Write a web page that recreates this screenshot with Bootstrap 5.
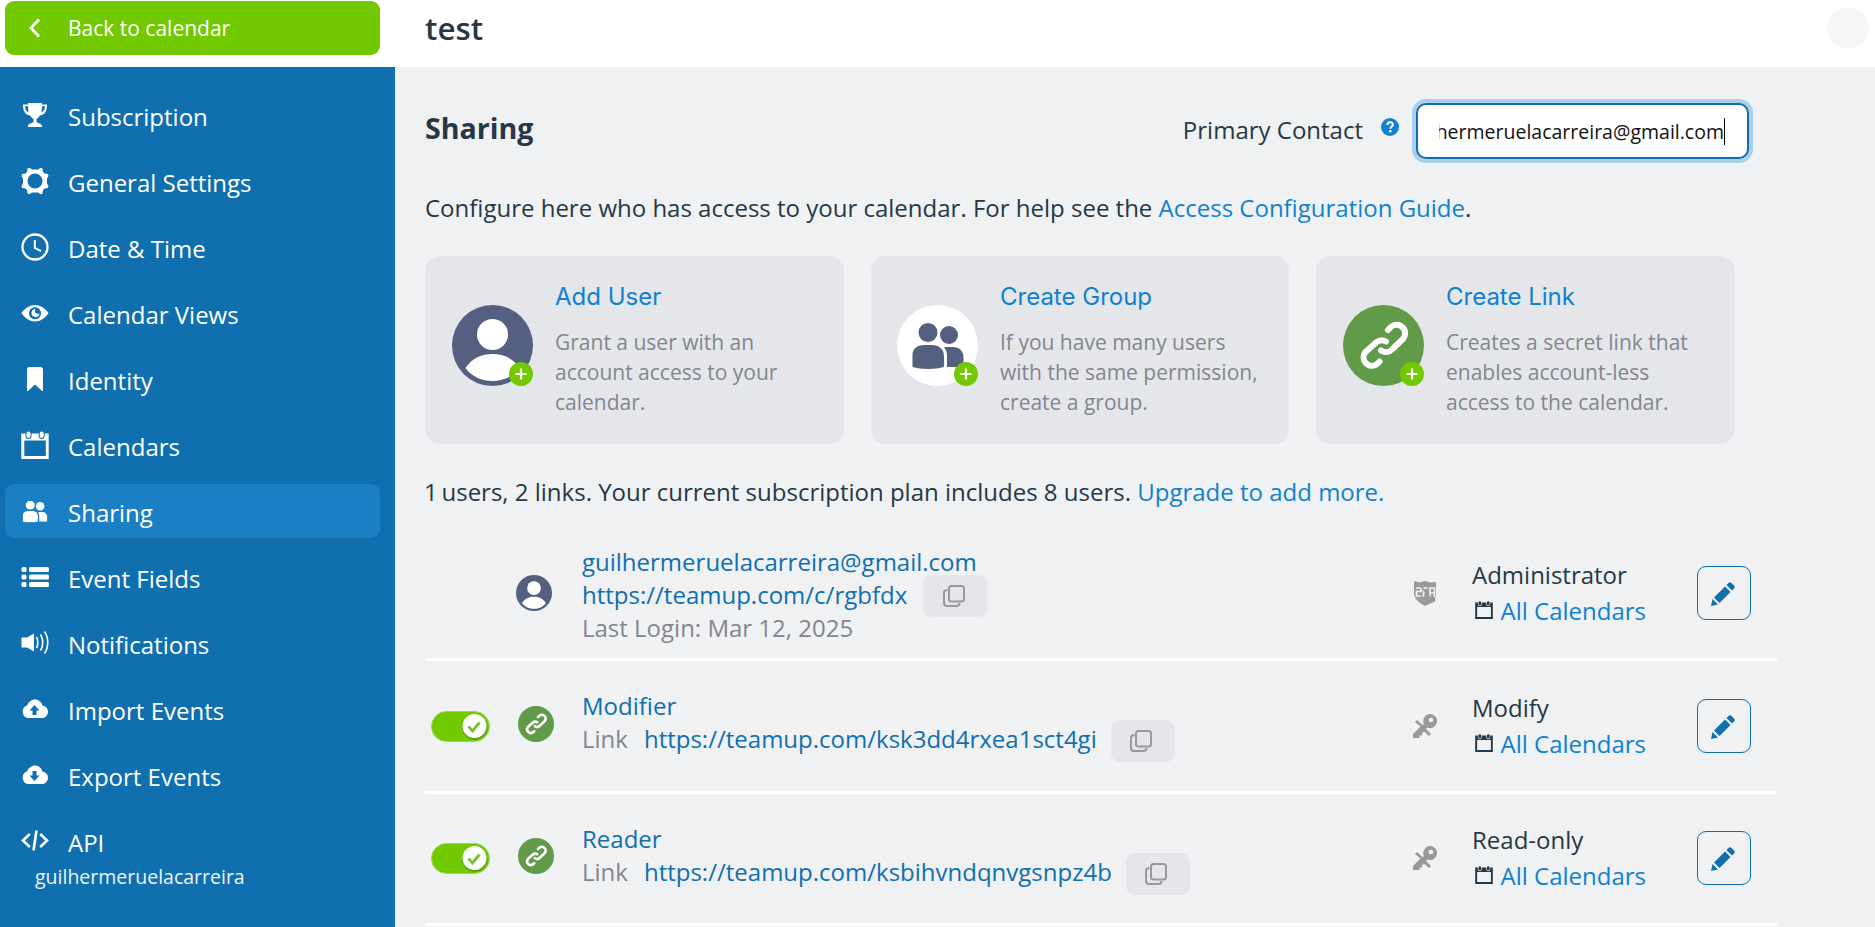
<!DOCTYPE html>
<html lang="en">
<head>
<meta charset="utf-8">
<title>test - Sharing</title>
<link href="https://cdn.jsdelivr.net/npm/bootstrap@5.3.0/dist/css/bootstrap.min.css" rel="stylesheet">
<style>
  html, body { height: 100%; }
  body { font-family: "Open Sans", sans-serif; font-size: 24px; line-height: 33px; color: #263845; background: #eff1f3; overflow: hidden; }
  a { text-decoration: none; color: #1081d0; }
  svg { display: block; }
  .page { height: 927px; }
  .topbar { height: 67px; background: #fff; }
  .topbar-left { width: 395px; padding: 1px 15px 0 5px; }
  .btn-back { width: 375px; height: 54px; background: #72c900; border-radius: 9px; color: #fff; font-size: 21px; }
  .btn-back svg { margin: 0 27px 0 24px; }
  .cal-title { font-size: 31.3px; font-weight: 600; line-height: 40px; margin: 8px 0 0 30px; }
  .avatar-spot { width: 42px; height: 42px; background: #f7f7f7; margin: 7px 6px 0 0; }
  .sidebar { width: 395px; background: #106fae; padding: 21px 15px 0 5px; }
  .side-item { height: 54px; margin-bottom: 12px; border-radius: 9px; color: #fff; }
  .side-item.current { background: #1b80c3; }
  .side-item svg { width: 28px; height: 28px; margin: 13px 0 0 16px; flex: none; fill: #fff; }
  .side-item span { margin: 12px 0 0 19px; }
  .side-user { color: #eaf4fb; font-size: 19.5px; line-height: 28px; margin: -17px 0 0 30px; font-weight: 500; }
  .content-area { padding: 33px 0 0 30px; width: 1382px; }
  .h-sharing { font-size: 28.6px; font-weight: 700; line-height: 40px; margin: 8px 0 0; }
  .contact-label { margin-top: 13px; }
  .help-dot { margin: 18px 17px 0 18px; }
  .contact-box { width: 333px; height: 56px; margin: 3px 28px 0 0; padding-left: 21px; border: 2px solid #106fae; border-radius: 10px; background: #fff; box-shadow: 0 0 0 4px #a9cfe9; color: #111; font-size: 19.5px; }
  .contact-clip { width: 286px; overflow: hidden; display: flex; justify-content: flex-end; white-space: nowrap; border-right: 1px solid #000; line-height: 27px; }
  .intro { margin: 32px 0; }
  .plan-line { margin: 31px 0 20px; }
  .plan-line span { margin: 0 -2.5px 0 -1px; }
  .share-list { gap: 27px; }
  .share-card { width: 419px; height: 188px; background: #e4e6ea; border-radius: 15px; padding: 22px 0 0 27px; }
  .share-card h3 { font: 400 24px/34px Inter, sans-serif; color: #1081d0; margin: 2px 0 13px; }
  .share-card p { font-size: 21px; line-height: 30px; color: #83868d; margin: 0; white-space: nowrap; }
  .round-pic { width: 81px; height: 81px; margin: 27px 22px 0 0; flex: none; }
  .share-card.group-card { width: 418px; padding-left: 26px; }
  .group-card .round-pic { padding: 18px 0 0 15px; }
  .access-list { width: 1352px; }
  .access-row { border-bottom: 3px solid #fff; height: 133px; }
  .access-row:last-child { height: 132px; padding-bottom: 1px; }
  .lk { color: #106fae; }
  .mut { color: #83868d; }
  .col-toggle { width: 87px; flex: none; padding-left: 6px; }
  .col-pic { width: 70px; flex: none; }
  .pic-user { margin-left: 4px; }
  .pic-link { margin: 0 0 4px 6px; }
  .user-text { padding-top: 2px; }
  .link-text { padding-bottom: 8px; }
  .access-row:last-child .link-text { padding-bottom: 7px; }
  .url-line { height: 33px; }
  .url-line .mut { margin-right: 16px; }
  .copy-btn { width: 64px; height: 42px; background: #e4e6ea; border-radius: 9px; display: inline-flex; align-items: center; justify-content: center; margin: -2px 0 0 14px; padding-right: 3px; }
  .user-text .copy-btn { margin: -2.5px 0 0 16px; }
  .col-key { width: 59px; }
  .col-role { width: 225px; line-height: 36px; }
  .col-role svg { margin: 8px 8px 0 2.500px; }
  .edit-btn { width: 54px; height: 54px; border: 1px solid #106fae; border-radius: 9px; margin-right: 26px; padding: 1px 3px 0 0; }
</style>
</head>
<body>
<svg width="0" height="0" class="position-absolute">
  <defs>
    <symbol id="i-cal" viewBox="0 0 28 28"><path fill-rule="evenodd" d="M.3 2.500h4.200v2.500a3 3 0 0 0 6 0v-2.500h7.200v2.500a3 3 0 0 0 6 0v-2.500h4v25.500H.3zM3.300 9.500v15.500h21.500V9.500z"/><rect x="5.500" y=".5" width="4" height="6.500" rx="2"/><rect x="18.700" y=".5" width="4" height="6.500" rx="2"/></symbol>
    <symbol id="i-user" viewBox="0 0 81 81"><circle cx="40.500" cy="40.500" r="40.500" fill="#555f80"/><circle cx="40.500" cy="29.500" r="15.500" fill="#fff"/><path d="M13.500 63C20 53 30 49 40.500 49S61 53 67.500 63C61 72 51 76 40.500 76S20 72 13.500 63z" fill="#fff"/></symbol>
    <symbol id="i-people" viewBox="0 0 52 46"><circle cx="16" cy="9.500" r="9.500"/><circle cx="37" cy="12" r="9"/><path d="M.5 44V32C.5 25 6 22 12 22h8c7 0 12 4 12 11v11c-8 2.500-24 2.500-31.500 0zM32 24h9c6 0 10.500 4 10.500 10v10H35V33c0-4-1-6.500-3-9z"/></symbol>
    <symbol id="i-link" viewBox="0 0 81 81"><circle cx="40.500" cy="40.500" r="40.500" fill="#619a49"/><path d="M45 25l3-3a8.500 8.500 0 0 1 12 12L49 44.500a8.500 8.500 0 0 1-11 1M36.500 56.500l-3 3a8.500 8.500 0 0 1-11.500-12L33 37.500a8.500 8.500 0 0 1 10-1" fill="none" stroke="#fff" stroke-width="6" stroke-linecap="round"/></symbol>
    <symbol id="i-plus" viewBox="0 0 24 24"><circle cx="12" cy="12" r="12" fill="#72c900"/><path d="M6.500 12h11M12 6.500v11" stroke="#fff" stroke-width="2.200"/></symbol>
    <symbol id="i-toggle" viewBox="0 0 59 31"><rect x=".5" y=".5" width="58" height="30" rx="15" fill="#72c900" stroke="#9ad94f"/><circle cx="43.800" cy="16" r="12.700" fill="#589d12"/><circle cx="43.500" cy="15" r="12" fill="#fff"/><path d="M37.500 15.500l4 4.500 7-8.500" fill="none" stroke="#78bf38" stroke-width="2.800"/></symbol>
    <symbol id="i-copy" viewBox="0 0 22 22"><rect x="6" y="1" width="15" height="15.500" rx="2.500" fill="none" stroke="#999" stroke-width="2"/><path d="M4.500 5C2 5 1 6 1 7.500V18c0 2 1 3 3 3h9.500c2 0 3-.8 3-3" fill="none" stroke="#999" stroke-width="2"/></symbol>
    <symbol id="i-pencil" viewBox="0 0 24 24"><path fill="#106fae" d="M0 24l1.500-7 5.500 5.500zM3 15.500L14 4.500l5.500 5.500L8.500 21zM15.500 3l2-2c1-1 2-1 3 0l2.500 2.500c1 1 1 2 0 3l-2 2z"/></symbol>
    <symbol id="i-key" viewBox="0 0 24 24"><path fill="#999" fill-rule="evenodd" d="M17 0a7 7 0 1 1-2.500 13.500L13 15l5 5-2 2-5-4.500-2 2v2H6.500V24H0v-4l7.500-7.500L2 8l2-2 6 5.500.7-2A7 7 0 0 1 17 0zm1 3.700a2.300 2.300 0 1 0 .01 0z"/></symbol>
  </defs>
</svg>

<div class="page d-flex flex-column">
  <header class="topbar d-flex flex-shrink-0">
    <div class="topbar-left">
      <a href="#" class="btn-back d-flex align-items-center"><svg width="12" height="20" viewBox="0 0 12 20"><path d="M10 1.500L2 10l8 8.500" fill="none" stroke="#fff" stroke-width="2.800"/></svg>Back to calendar</a>
    </div>
    <h1 class="cal-title">test</h1>
    <div class="avatar-spot rounded-circle ms-auto"></div>
  </header>

  <div class="d-flex flex-grow-1">
    <nav class="sidebar flex-shrink-0">
      <a class="side-item d-flex" href="#"><svg viewBox="0 0 28 28"><path fill-rule="evenodd" d="M7 2h14v1.500h5c0 7-2 10-7 11-1.500 2-2.500 3-3.500 3.500v3c1 1 5 1.500 5.500 3.500v1.500H7V24.500C7.500 22.500 11.500 22 12.500 21v-3c-1-.5-2-1.500-3.500-3.500-5-1-7-4-7-11h5zM4 5.200c.2 3 1 5 3.500 6L7 5.200zm20 0h-3l-.5 6c2.500-1 3.300-3 3.500-6z"/></svg><span>Subscription</span></a>
      <a class="side-item d-flex" href="#"><svg viewBox="0 0 28 28"><path fill-rule="evenodd" d="M8.500 .8L11 2.500h6L19.500 .8l2 .8.5 3.400 1.500 1.500 3.300.5.700 2-1.500 2.500v5l1.500 2.500-.7 2-3.300.5-1.500 1.500-.5 3.400-2 .8-2.500-1.700h-6l-2.500 1.700-2-.8L6 23l-1.500-1.500-3.300-.5-.7-2L2 16.500v-5L.5 9l.7-2 3.300-.5L6 5l.5-3.400zM14 6.500a7.500 7.500 0 1 0 .01 0z"/></svg><span>General Settings</span></a>
      <a class="side-item d-flex" href="#"><svg viewBox="0 0 28 28"><circle cx="14" cy="14" r="12.500" fill="none" stroke="#fff" stroke-width="2.300"/><path d="M13.800 7v8l6.200 3.200" fill="none" stroke="#fff" stroke-width="2"/></svg><span>Date &amp; Time</span></a>
      <a class="side-item d-flex" href="#"><svg viewBox="0 0 28 28"><path fill-rule="evenodd" d="M.5 14C4 9 9 6 14 6s10 3 13.500 8C24 19.500 19 22.500 14 22.500S4 19.500 .5 14zM14 8.200a6 6 0 1 0 .01 0z"/><path d="M14.500 10a4 4 0 1 0 4 4.500c-2 .5-4 0-4.500-1.500-.2-1 .2-2 .5-3z"/></svg><span>Calendar Views</span></a>
      <a class="side-item d-flex" href="#"><svg viewBox="0 0 28 28"><path d="M6 4.500C6 3 7 2 8.500 2h11C21 2 22 3 22 4.500V26h-1l-7-6.500L7 26H6z"/></svg><span>Identity</span></a>
      <a class="side-item d-flex" href="#"><svg><use href="#i-cal"/></svg><span>Calendars</span></a>
      <a class="side-item current d-flex" href="#"><svg viewBox="-1 -1 54 54"><use href="#i-people" x="1" y="6" width="50" height="42"/></svg><span>Sharing</span></a>
      <a class="side-item d-flex" href="#"><svg viewBox="0 0 28 28"><rect x=".5" y="4" width="5" height="5" rx="1.500"/><rect x=".5" y="11.500" width="5" height="5" rx="1.500"/><rect x=".5" y="19" width="5" height="5" rx="1.500"/><rect x="8" y="4" width="20" height="5" rx="1.500"/><rect x="8" y="11.500" width="20" height="5" rx="1.500"/><rect x="8" y="19" width="20" height="5" rx="1.500"/></svg><span>Event Fields</span></a>
      <a class="side-item d-flex" href="#"><svg viewBox="0 0 28 28"><path d="M.5 8.500H6L13 4.500v18L6 18.500H.5z"/><path d="M15.500 8c1.800 3 1.800 8 0 11M19.500 5.500c3 4.500 3 11.500 0 16M23.500 2.500c4.300 6 4.300 16 0 22" fill="none" stroke="#fff" stroke-width="1.600"/></svg><span>Notifications</span></a>
      <a class="side-item d-flex" href="#"><svg viewBox="0 0 28 28"><path fill-rule="evenodd" d="M7 23a6.500 6.500 0 0 1-1-12.500C7.500 7 10.500 4.500 14 4.500s6.500 2.500 7.500 6A6.300 6.300 0 0 1 21.500 23zM13.500 10l-5 5.500h3V20h4v-4.500h3z"/></svg><span>Import Events</span></a>
      <a class="side-item d-flex" href="#"><svg viewBox="0 0 28 28"><path fill-rule="evenodd" d="M7 23a6.500 6.500 0 0 1-1-12.500C7.500 7 10.500 4.500 14 4.500s6.500 2.500 7.500 6A6.300 6.300 0 0 1 21.500 23zM13.500 20l5-5.500h-3V10h-4v4.500h-3z"/></svg><span>Export Events</span></a>
      <a class="side-item d-flex" href="#"><svg viewBox="0 0 28 28"><path d="M8.800 7L2 13.500 8.800 20M19.200 7L26 13.500 19.200 20M15.500 3.500l-3 20" fill="none" stroke="#fff" stroke-width="2.600"/></svg><span>API</span></a>
      <div class="side-user">guilhermeruelacarreira</div>
    </nav>

    <main class="content-area">
      <div class="d-flex align-items-start">
        <h2 class="h-sharing">Sharing</h2>
        <label class="contact-label ms-auto">Primary Contact</label>
        <svg class="help-dot" width="18" height="18" viewBox="0 0 18 18"><circle cx="9" cy="9" r="9" fill="#1081d0"/><path d="M6.300 7c0-3.800 5.600-3.500 5.600-.4 0 2-2.500 1.800-2.500 4.200" fill="none" stroke="#fff" stroke-width="2"/><circle cx="9.300" cy="13.300" r="1.300" fill="#fff"/></svg>
        <div class="contact-box d-flex align-items-center"><div class="contact-clip">guilhermeruelacarreira@gmail.com</div></div>
      </div>

      <p class="intro">Configure here who has access to your calendar. For help see the <a href="#">Access Configuration Guide</a>.</p>

      <div class="share-list d-flex">
        <div class="share-card d-flex">
          <div class="round-pic position-relative"><svg width="81" height="81"><use href="#i-user"/></svg><svg class="position-absolute end-0 bottom-0" width="24" height="24"><use href="#i-plus"/></svg></div>
          <div><h3>Add User</h3><p>Grant a user with an<br>account access to your<br>calendar.</p></div>
        </div>
        <div class="share-card group-card d-flex">
          <div class="round-pic position-relative bg-white rounded-circle"><svg width="52" height="46" fill="#555f80"><use href="#i-people"/></svg><svg class="position-absolute end-0 bottom-0" width="24" height="24"><use href="#i-plus"/></svg></div>
          <div><h3>Create Group</h3><p>If you have many users<br>with the same permission,<br>create a group.</p></div>
        </div>
        <div class="share-card d-flex">
          <div class="round-pic position-relative"><svg width="81" height="81"><use href="#i-link"/></svg><svg class="position-absolute end-0 bottom-0" width="24" height="24"><use href="#i-plus"/></svg></div>
          <div><h3>Create Link</h3><p>Creates a secret link that<br>enables account-less<br>access to the calendar.</p></div>
        </div>
      </div>

      <p class="plan-line"><span>1</span> users, 2 links. Your current subscription plan includes 8 users. <a href="#">Upgrade to add more.</a></p>

      <section class="access-list">
        <div class="access-row d-flex align-items-center">
          <div class="col-toggle"></div>
          <div class="col-pic"><svg class="pic-user" width="36" height="36"><use href="#i-user"/></svg></div>
          <div class="user-text flex-grow-1"><div class="lk">guilhermeruelacarreira@gmail.com</div><div class="lk url-line d-flex">https://teamup.com/c/rgbfdx<span class="copy-btn"><svg width="22" height="22"><use href="#i-copy"/></svg></span></div><div class="mut">Last Login: Mar 12, 2025</div></div>
          <div class="col-key"><svg width="24" height="26" viewBox="0 0 24 26"><path fill="#999" d="M1 2l1-1 4 1.500L12 1l6 1.500L23 2v13l-1 3 .5 3-2 1-2 1-6.500 3-5-3C3 20 1.500 17 1 14z"/><path d="M3 8h5v3.500H3.500V16H8M10.500 17V8H15M10.500 12H13M17 17V8h4.500v9M17 13h4" fill="none" stroke="#eff1f3" stroke-width="1.700"/><path d="M5 3l16 19" stroke="#999" stroke-width="1.500"/></svg></div>
          <div class="col-role"><div>Administrator</div><div class="d-flex"><svg width="18" height="18" fill="#263845"><use href="#i-cal"/></svg><a href="#">All Calendars</a></div></div>
          <a href="#" class="edit-btn d-flex align-items-center justify-content-center"><svg width="24" height="24"><use href="#i-pencil"/></svg></a>
        </div>
        <div class="access-row d-flex align-items-center">
          <div class="col-toggle"><svg width="59" height="31"><use href="#i-toggle"/></svg></div>
          <div class="col-pic"><svg class="pic-link" width="36" height="36"><use href="#i-link"/></svg></div>
          <div class="link-text flex-grow-1"><div class="lk">Modifier</div><div class="lk url-line d-flex"><span class="mut">Link</span>https://teamup.com/ksk3dd4rxea1sct4gi<span class="copy-btn"><svg width="22" height="22"><use href="#i-copy"/></svg></span></div></div>
          <div class="col-key"><svg width="24" height="24"><use href="#i-key"/></svg></div>
          <div class="col-role"><div>Modify</div><div class="d-flex"><svg width="18" height="18" fill="#263845"><use href="#i-cal"/></svg><a href="#">All Calendars</a></div></div>
          <a href="#" class="edit-btn d-flex align-items-center justify-content-center"><svg width="24" height="24"><use href="#i-pencil"/></svg></a>
        </div>
        <div class="access-row d-flex align-items-center">
          <div class="col-toggle"><svg width="59" height="31"><use href="#i-toggle"/></svg></div>
          <div class="col-pic"><svg class="pic-link" width="36" height="36"><use href="#i-link"/></svg></div>
          <div class="link-text flex-grow-1"><div class="lk">Reader</div><div class="lk url-line d-flex"><span class="mut">Link</span>https://teamup.com/ksbihvndqnvgsnpz4b<span class="copy-btn"><svg width="22" height="22"><use href="#i-copy"/></svg></span></div></div>
          <div class="col-key"><svg width="24" height="24"><use href="#i-key"/></svg></div>
          <div class="col-role"><div>Read-only</div><div class="d-flex"><svg width="18" height="18" fill="#263845"><use href="#i-cal"/></svg><a href="#">All Calendars</a></div></div>
          <a href="#" class="edit-btn d-flex align-items-center justify-content-center"><svg width="24" height="24"><use href="#i-pencil"/></svg></a>
        </div>
      </section>
    </main>
  </div>
</div>
<script src="https://cdn.jsdelivr.net/npm/bootstrap@5.3.0/dist/js/bootstrap.bundle.min.js"></script>
</body>
</html>
